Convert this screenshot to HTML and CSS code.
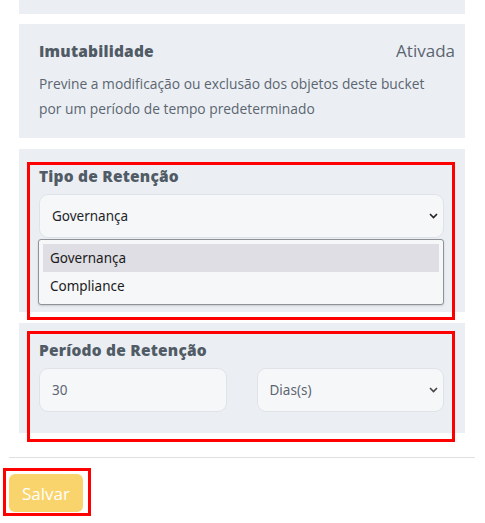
FILE: index.html
```html
<!DOCTYPE html>
<html lang="pt-BR">
<head>
    <meta charset="UTF-8">
    <meta name="viewport" content="width=device-width, initial-scale=1.0">
    <title>Bucket - Imutabilidade</title>
    <link rel="stylesheet" href="styles.css">
</head>
<body>
    <div class="page">
        <div class="panel panel-top"></div>

        <div class="panel panel-info">
            <div class="info-head">
                <h2 class="panel-title">Imutabilidade</h2>
                <span class="status">Ativada</span>
            </div>
            <p class="info-text">Previne a modificação ou exclusão dos objetos deste bucket por um período de tempo predeterminado</p>
        </div>

        <div class="panel panel-type">
            <h2 class="panel-title">Tipo de Retenção</h2>
            <div class="field select-field">
                <span>Governança</span>
                <svg class="chevron" width="9" height="6" viewBox="0 0 9 6"><path d="M1 1l3.5 3.5 3.5-3.5" fill="none" stroke="#222" stroke-width="1.6"/></svg>
            </div>
            <ul class="options">
                <li class="option active">Governança</li>
                <li class="option">Compliance</li>
            </ul>
        </div>

        <div class="panel panel-period">
            <h2 class="panel-title">Período de Retenção</h2>
            <div class="period-row">
                <div class="field input-field">30</div>
                <div class="field select-field muted">
                    <span>Dias(s)</span>
                    <svg class="chevron" width="9" height="6" viewBox="0 0 9 6"><path d="M1 1l3.5 3.5 3.5-3.5" fill="none" stroke="#444" stroke-width="1.6"/></svg>
                </div>
            </div>
        </div>

        <hr class="divider">
        <button class="save-btn" disabled>Salvar</button>
    </div>

    <!-- review markers -->
    <div class="marker marker-type"></div>
    <div class="marker marker-period"></div>
    <div class="marker marker-save"></div>
</body>
</html>
```

FILE: styles.css
```css
body {
    margin: 0;
    background-color: #ffffff;
    font-family: 'Open Sans', 'Liberation Sans', sans-serif;
    position: relative;
    height: 523px;
    overflow: hidden;
}
.page {
    padding: 0 10px 0 9px;
}
.panel {
    background-color: #ebeff3;
    margin: 0 10px 11px 10px;
    padding: 17px 21px 17px 20px;
}
.panel-top {
    height: 14px;
    padding: 0;
    margin-bottom: 10px;
}
.panel-title {
    margin: 0;
    font-size: 15.5px;
    line-height: 20px;
    font-weight: 800;
    letter-spacing: 0.2px;
    color: #515b66;
}
.info-head {
    display: flex;
    justify-content: space-between;
    align-items: center;
    height: 20px;
}
.status {
    font-size: 17px;
    line-height: 20px;
    color: #5b6571;
    margin-right: -11px;
}
.info-text {
    margin: 10px 0 0 0;
    font-size: 13.8px;
    line-height: 25px;
    color: #5b6571;
}
.panel-type {
    padding: 17px 21px 7px 20px;
}
.panel-period {
    padding: 17px 21px 21px 20px;
    margin-bottom: 24px;
}
.field {
    box-sizing: border-box;
    height: 44px;
    background-color: #f6f7f9;
    border: 1px solid #dfe3e8;
    border-radius: 9px;
    padding: 0 12px;
    display: flex;
    align-items: center;
    font-family: 'Noto Sans', 'Open Sans', sans-serif;
    font-size: 13.5px;
    color: #212529;
}
.select-field {
    justify-content: space-between;
    margin-top: 8px;
    padding-right: 5px;
}
.muted {
    color: #5b6571;
}
.input-field {
    color: #5b6571;
}
.options {
    list-style: none;
    margin: 1px 0 0 -1px;
    padding: 4px 4px;
    background-color: #f6f7f9;
    border: 1px solid #8f9296;
    border-radius: 3px;
    box-shadow: 0 1px 2px rgba(0, 0, 0, 0.15);
}
.option {
    height: 28px;
    line-height: 28px;
    padding: 0 7px;
    font-family: 'Noto Sans', 'Open Sans', sans-serif;
    font-size: 13.5px;
    color: #1b1b1b;
}
.option.active {
    background-color: #dfdee4;
}
.period-row {
    display: grid;
    grid-template-columns: 1fr 1fr;
    gap: 30px;
    margin-top: 8px;
}
.period-row .select-field {
    margin-top: 0;
}
.divider {
    border: none;
    border-top: 1px solid #e0e0e0;
    margin: 0;
}
.save-btn {
    margin-top: 16px;
    width: 74px;
    height: 38px;
    border: none;
    border-radius: 6px;
    background-color: #f9d46c;
    color: #ffffff;
    font-family: 'Open Sans', sans-serif;
    font-size: 17px;
    font-weight: 500;
    padding: 0;
}
.marker {
    position: absolute;
    border: 3px solid #ff0000;
    box-sizing: border-box;
}
.marker-type {
    left: 27px;
    top: 162px;
    width: 428px;
    height: 158px;
}
.marker-period {
    left: 27px;
    top: 331px;
    width: 428px;
    height: 111px;
}
.marker-save {
    left: 3px;
    top: 468px;
    width: 88px;
    height: 48px;
}
```
